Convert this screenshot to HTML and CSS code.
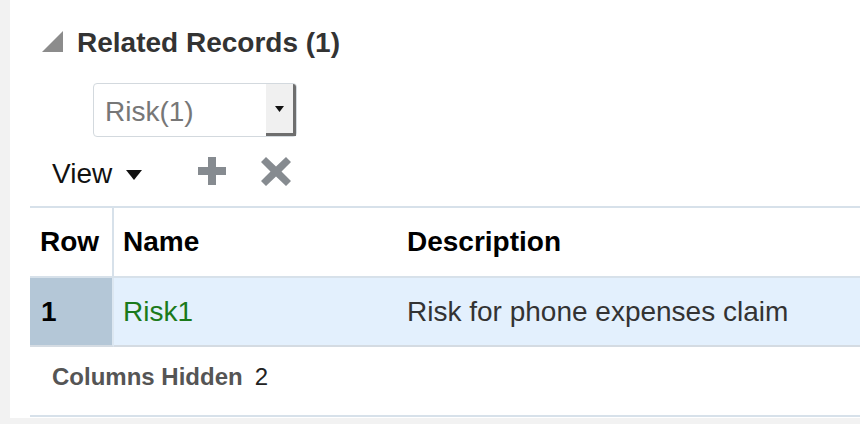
FILE: index.html
```html
<!DOCTYPE html>
<html lang="en">
<head>
  <meta charset="UTF-8" />
  <meta name="viewport" content="width=device-width, initial-scale=1.0" />
  <title>Related Records</title>
  <link rel="stylesheet" href="styles.css">
</head>
<body>
  <div class="panel">
    <div class="section-head">
      <svg class="disclosure" width="21" height="21" viewBox="0 0 21 21"><polygon points="21,0 21,21 0,21" /></svg>
      <h2>Related Records (1)</h2>
    </div>

    <div class="type-select">
      <span class="type-value">Risk(1)</span>
      <span class="type-btn">
        <svg width="9" height="6" viewBox="0 0 9 6"><polygon points="0,0 9,0 4.5,6" /></svg>
      </span>
    </div>

    <div class="toolbar">
      <span class="view-menu">View</span>
      <svg class="view-caret" width="16" height="10" viewBox="0 0 16 10"><polygon points="0,0 16,0 8,10" /></svg>
      <svg class="tool-add" width="28" height="28" viewBox="0 0 28 28"><path d="M10 0h8v10h10v8H18v10h-8V18H0v-8h10z" /></svg>
      <svg class="tool-del" width="30" height="29" viewBox="0 0 30 29"><path d="M5 0l10 9.5L25 0l5 5-9.5 9.5L30 24l-5 5-10-9.5L5 29l-5-5 9.5-9.5L0 5z" /></svg>
    </div>

    <table class="records">
      <colgroup>
        <col class="c-row">
        <col class="c-name">
        <col>
      </colgroup>
      <thead>
        <tr>
          <th class="col-row">Row</th>
          <th>Name</th>
          <th>Description</th>
        </tr>
      </thead>
      <tbody>
        <tr class="selected">
          <th class="row-head">1</th>
          <td class="name-link">Risk1</td>
          <td>Risk for phone expenses claim</td>
        </tr>
      </tbody>
    </table>

    <div class="table-status"><strong>Columns Hidden</strong><span class="count">2</span></div>
  </div>
</body>
</html>
```

FILE: styles.css
```css
body {
  margin: 0;
  background-color: #f2f2f2;
  font-family: "Liberation Sans", Arial, sans-serif;
  color: #333;
  overflow: hidden;
}
.panel {
  margin-left: 10px;
  height: 418px;
  padding-left: 20px;
  background-color: #fff;
}
.section-head {
  display: flex;
  align-items: flex-start;
  padding-top: 27px;
}
.disclosure {
  fill: #8c8c8c;
  margin: 4px 14px 0 12px;
}
.section-head h2 {
  margin: 0;
  font-size: 28px;
  line-height: 32px;
  font-weight: bold;
  color: #333;
}
.type-select {
  display: flex;
  width: 204px;
  height: 54px;
  box-sizing: border-box;
  margin: 24px 0 0 63px;
  border: 1px solid #d3d9de;
  border-radius: 4px;
}
.type-value {
  flex: 1;
  padding: 3px 0 0 11px;
  font-size: 28px;
  line-height: 49px;
  color: #777;
}
.type-btn {
  width: 27px;
  display: flex;
  align-items: center;
  justify-content: center;
  background-color: #f0f0f0;
  border-right: 3px solid #6e6e6e;
  border-bottom: 3px solid #6e6e6e;
  border-top-right-radius: 3px;
}
.type-btn svg {
  fill: #111;
}
.toolbar {
  display: flex;
  align-items: flex-start;
  margin-top: 21px;
  height: 32px;
  padding-left: 22px;
}
.view-menu {
  font-size: 28px;
  line-height: 32px;
  color: #111;
}
.view-caret {
  fill: #111;
  margin: 12px 0 0 14px;
}
.tool-add {
  fill: #868b90;
  margin: -1px 0 0 56px;
}
.tool-del {
  fill: #868b90;
  margin: -1px 0 0 35px;
}
.records {
  width: 100%;
  margin-top: 16px;
  border-collapse: separate;
  border-spacing: 0;
  table-layout: fixed;
  border-top: 2px solid #d7e1ea;
  font-size: 28px;
}
.c-row {
  width: 84px;
}
.c-name {
  width: 283px;
}
.records th,
.records td {
  text-align: left;
  padding: 0 0 0 10px;
  white-space: nowrap;
}
.records thead th {
  height: 70px;
  box-sizing: border-box;
  color: #000;
  font-weight: bold;
  border-bottom: 2px solid #d7e1ea;
}
.records thead th.col-row {
  padding-left: 10px;
  border-right: 2px solid #d7e1ea;
}
.records thead th:nth-child(2) {
  padding-left: 9px;
}
.records tbody td,
.records tbody th {
  height: 69px;
  box-sizing: border-box;
  border-bottom: 2px solid #d4dbe2;
  background-color: #e3f0fd;
  color: #333;
}
.records tbody th.row-head {
  padding-left: 11px;
  background-color: #b4c7d7;
  border-right: 2px solid #dce7f1;
  color: #000;
  font-weight: bold;
}
.records td.name-link {
  padding-left: 9px;
  color: #1b7a1b;
}
.table-status {
  height: 70px;
  box-sizing: border-box;
  padding: 16px 0 0 22px;
  border-bottom: 2px solid #d7e1ea;
  font-size: 24px;
  line-height: 28px;
  color: #555;
}
.table-status .count {
  margin-left: 12px;
  color: #222;
}
```
